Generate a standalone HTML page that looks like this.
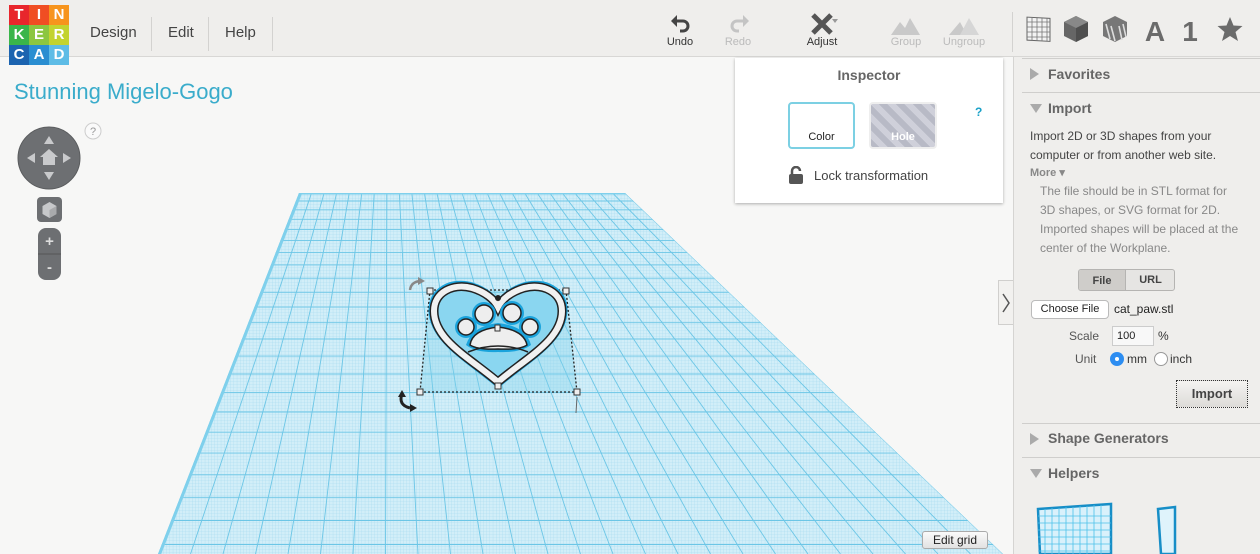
<!DOCTYPE html>
<html><head><meta charset="utf-8"><style>
*{box-sizing:border-box;margin:0;padding:0}
body{width:1260px;height:554px;overflow:hidden;position:relative;font-family:"Liberation Sans",sans-serif;background:#f7f7f6}
.abs{position:absolute}
#top{left:0;top:0;width:1260px;height:57px;background:#efeeec;border-bottom:1px solid #d8d7d5}
.tile{position:absolute;width:20px;height:20px;color:#fff;font-weight:bold;font-size:15px;text-align:center;line-height:20px}
.menu{position:absolute;top:24px;font-size:15px;color:#444}
.sep{position:absolute;top:17px;width:1px;height:34px;background:#d3d2d0}
.tl{position:absolute;top:36px;font-size:11px;text-align:center;width:60px}
#right{left:1013px;top:57px;width:247px;height:497px;background:#efeeec;border-left:1px solid #d5d4d2}
.hdr{position:absolute;left:34px;font-size:14px;font-weight:bold;color:#666}
.tri{position:absolute;left:16px;width:0;height:0}
.hl{position:absolute;left:8px;width:239px;height:1px;background:#cfcecc}
.rt{position:absolute;font-size:12px;color:#444}
</style></head><body>

<svg class="abs" style="left:0;top:0" width="1260" height="554">
<defs><clipPath id="c"><polygon points="299,193 625,193 1003,554 158,554"/></clipPath>
<pattern id="mp" width="3.2" height="3" patternUnits="userSpaceOnUse"><rect width="3.2" height="3" fill="#d2eef8"/><path d="M0 0H3.2M0 0V3" stroke="#a6dbef" stroke-width="0.6"/></pattern></defs>
<g clip-path="url(#c)">
<rect x="150" y="190" width="860" height="370" fill="url(#mp)"/>
<g stroke="#6cc6e6" stroke-width="0.9" fill="none">
<path d="M299 193L158 554M311.5 193L190.5 554M324.1 193L223 554M336.6 193L255.5 554M349.2 193L288 554M361.7 193L320.5 554M374.2 193L353 554M386.8 193L385.5 554M399.3 193L418 554M411.8 193L450.5 554M424.4 193L483 554M436.9 193L515.5 554M449.5 193L548 554M462 193L580.5 554M474.5 193L613 554M487.1 193L645.5 554M499.6 193L678 554M512.2 193L710.5 554M524.7 193L743 554M537.2 193L775.5 554M549.8 193L808 554M562.3 193L840.5 554M574.8 193L873 554M587.4 193L905.5 554M599.9 193L938 554M612.5 193L970.5 554M625 193L1003 554"/>
<path d="M150 194H1010M150 201H1010M150 209.8H1010M150 219.3H1010M150 229.6H1010M150 240.6H1010M150 252.4H1010M150 264.9H1010M150 278.2H1010M150 292.3H1010M150 307.1H1010M150 322.7H1010M150 339H1010M150 356.1H1010M150 374H1010M150 392.6H1010M150 412H1010M150 432.2H1010M150 453.1H1010M150 474.8H1010M150 497.3H1010M150 520.5H1010M150 544.5H1010"/>
</g>
<path d="M299 193L158 554" stroke="#7fd0ec" stroke-width="6"/>
<path d="M299 193H625" stroke="#7fd0ec" stroke-width="3"/>
</g>
<polygon points="430,290 566,290 577,392 420,392" fill="#7fd0ec" opacity="0.35"/>
<path d="M430 290H566M420 392H577M430 290L420 392M566 290L577 392" stroke="#222" stroke-width="1.3" stroke-dasharray="2,2" fill="none"/>
<path d="M498 384 C470 360 432 340 432 310 C432 290 452 280 472 286 C485 290 494 298 498 306 C502 298 511 290 524 286 C544 280 564 290 564 310 C564 340 526 360 498 384Z" fill="#8ad6f0" stroke="#1aa3dc" stroke-width="7"/>
<path d="M498 382 C470 358 434 340 434 311 C434 292 453 283 472 288 C485 292 494 299 498 307 C502 299 511 292 524 288 C543 283 562 292 562 311 C562 340 526 358 498 382Z" fill="none" stroke="#222" stroke-width="9"/>
<path d="M498 382 C470 358 434 340 434 311 C434 292 453 283 472 288 C485 292 494 299 498 307 C502 299 511 292 524 288 C543 283 562 292 562 311 C562 340 526 358 498 382Z" fill="none" stroke="#f1f1f1" stroke-width="6"/>
<g fill="#1aa3dc"><circle cx="484" cy="314" r="12"/><circle cx="512" cy="313" r="12"/><circle cx="466" cy="327" r="11"/><circle cx="530" cy="327" r="11"/><path d="M466 345 Q472 326 498 323 Q526 326 531 345 Q520 353 498 352 Q476 353 466 345Z"/></g>
<g fill="#eee" stroke="#222" stroke-width="1.5">
<path d="M470 345 Q472 330 498 327 Q524 330 527 345 Q520 350 498 349 Q478 350 470 345Z"/>
<circle cx="484" cy="314" r="9"/><circle cx="512" cy="313" r="9"/>
<circle cx="466" cy="327" r="8"/><circle cx="530" cy="327" r="8"/>
</g>
<path d="M468 352 Q498 340 528 352" stroke="#222" stroke-width="1.5" fill="none"/>
<circle cx="498" cy="298" r="3" fill="#222"/>
<g fill="#eee" stroke="#333" stroke-width="1"><rect x="427" y="288" width="6" height="6"/><rect x="563" y="288" width="6" height="6"/><rect x="417" y="389" width="6" height="6"/><rect x="574" y="389" width="6" height="6"/><rect x="495" y="383" width="6" height="6"/><rect x="495" y="325" width="5" height="6"/></g>
<path d="M410 290 Q411 282 420 281" stroke="#888" stroke-width="2.5" fill="none"/><path d="M418 277 L425 281 L418 285Z" fill="#888"/>
<path d="M402 394 Q398 405 410 408" stroke="#222" stroke-width="3" fill="none"/><path d="M398 397 L402 390 L406 397Z" fill="#222"/><path d="M410 404 L417 408 L410 412Z" fill="#222"/>
<path d="M577 397 L576 413" stroke="#666" stroke-width="1"/>
</svg>

<div class="abs" style="left:14px;top:79px;font-size:22px;color:#3aaccb">Stunning Migelo-Gogo</div>

<svg class="abs" style="left:15px;top:120px" width="95" height="165">
<circle cx="34" cy="38" r="31" fill="#6d6f72" stroke="#5a5c5e"/>
<g fill="#c9cacc"><path d="M34 16l-5 8h10z"/><path d="M34 60l-5-8h10z"/><path d="M12 38l8-5v10z"/><path d="M56 38l-8-5v10z"/><path d="M34 29l-9 8h3v8h12v-8h3z"/></g>
<circle cx="78" cy="11" r="8" fill="#fafafa" stroke="#ccc"/><text x="78" y="15" font-size="11" fill="#999" text-anchor="middle" font-family="Liberation Sans">?</text>
<rect x="22" y="77" width="25" height="25" rx="4" fill="#6d6f72"/>
<path d="M34.5 82l7 4v8l-7 4-7-4v-8z" fill="#c7c8ca"/><path d="M34.5 90l7-4v8l-7 4z" fill="#a9aaac"/>
<rect x="23" y="108" width="23" height="52" rx="8" fill="#6d6f72"/>
<line x1="23" y1="134" x2="46" y2="134" stroke="#555"/>
<text x="34.5" y="126" font-size="15" fill="#ddd" text-anchor="middle" font-weight="bold" font-family="Liberation Sans">+</text>
<text x="34.5" y="152" font-size="15" fill="#ddd" text-anchor="middle" font-weight="bold" font-family="Liberation Sans">-</text>
</svg>

<div id="top" class="abs">
<div class="tile" style="left:9px;top:5px;background:#e8262c">T</div>
<div class="tile" style="left:29px;top:5px;background:#f04e23">I</div>
<div class="tile" style="left:49px;top:5px;background:#f7941d">N</div>
<div class="tile" style="left:9px;top:25px;background:#3ab54a">K</div>
<div class="tile" style="left:29px;top:25px;background:#8cc63f">E</div>
<div class="tile" style="left:49px;top:25px;background:#c3d32f">R</div>
<div class="tile" style="left:9px;top:45px;background:#1c64b0">C</div>
<div class="tile" style="left:29px;top:45px;background:#2a8ed1">A</div>
<div class="tile" style="left:49px;top:45px;background:#5ebce6">D</div>
<div class="menu" style="left:90px">Design</div><div class="sep" style="left:151px"></div>
<div class="menu" style="left:168px">Edit</div><div class="sep" style="left:208px"></div>
<div class="menu" style="left:225px">Help</div><div class="sep" style="left:272px"></div>
<svg class="abs" style="left:670px;top:14px" width="22" height="20"><path d="M5 7h8a5 5 0 0 1 0 10h-3" stroke="#444" stroke-width="3" fill="none"/><path d="M1 7l6-6v12z" fill="#444"/></svg>
<div class="tl" style="left:650px;color:#333">Undo</div>
<svg class="abs" style="left:728px;top:14px" width="22" height="20"><path d="M17 7h-8a5 5 0 0 0 0 10h2" stroke="#c4c4c4" stroke-width="3" fill="none"/><path d="M21 7l-6-6v12z" fill="#c4c4c4"/></svg>
<div class="tl" style="left:708px;color:#bbb">Redo</div>
<svg class="abs" style="left:810px;top:12px" width="32" height="24"><path d="M3 3l18 18M21 3L3 21" stroke="#555" stroke-width="5"/><path d="M28 7l-3 4-3-4z" fill="#999"/></svg>
<div class="tl" style="left:792px;color:#333">Adjust</div>
<svg class="abs" style="left:890px;top:16px" width="32" height="20"><path d="M1 19l9-13 5 6 5-10 10 17z" fill="#c9c9c9"/></svg>
<div class="tl" style="left:876px;color:#bbb">Group</div>
<svg class="abs" style="left:948px;top:16px" width="32" height="20"><path d="M1 19l11-13 7 13z" fill="#c9c9c9"/><path d="M12 19l9-17 10 17z" fill="#d6d6d6"/></svg>
<div class="tl" style="left:934px;color:#bbb">Ungroup</div>
<div class="sep" style="left:1012px;top:12px;height:40px"></div>
<svg class="abs" style="left:1024px;top:14px" width="220" height="30">
<g stroke="#666" fill="#f3f3f3"><rect x="3" y="3" width="23" height="23" transform="skewY(3)"/></g>
<path d="M8 4v23M13 4v23M18 4v23M23 4v23M3 8h23M3 13h23M3 18h23M3 23h23" stroke="#777" stroke-width="0.8"/>
<path d="M52 2l12 6v14l-12 6-12-6v-14z" fill="#666"/><path d="M52 14l12-6v14l-12 6z" fill="#4f4f4f"/><path d="M40 8l12-6 12 6-12 6z" fill="#888"/>
<path d="M91 2l12 6v14l-12 6-12-6v-14z" fill="#777"/><path d="M82 10l4 15M87 12l4 15M95 12l3 14M99 10l3 13" stroke="#ddd" stroke-width="1.6"/>
<text x="131" y="27" font-size="28" font-weight="bold" fill="#6b6b6b" text-anchor="middle" font-family="Liberation Sans">A</text>
<text x="166" y="27" font-size="28" font-weight="bold" fill="#6b6b6b" text-anchor="middle" font-family="Liberation Sans">1</text>
<path d="M206 3l3.5 8.5 9 .5-7 6 2.5 9-8-5-8 5 2.5-9-7-6 9-.5z" fill="#6b6b6b"/>
</svg>
</div>

<div class="abs" style="left:735px;top:58px;width:268px;height:145px;background:#fff;box-shadow:0 1px 3px rgba(0,0,0,.3)">
<div class="abs" style="left:0;width:268px;top:9px;text-align:center;font-size:14px;font-weight:bold;color:#666">Inspector</div>
<div class="abs" style="left:53px;top:44px;width:67px;height:47px;border:2px solid #7cd0e3;border-radius:4px;background:#fff;font-size:11px;text-align:center;padding-top:27px;color:#222">Color</div>
<div class="abs" style="left:134px;top:44px;width:68px;height:47px;border:2px solid #eee;border-radius:4px;background:repeating-linear-gradient(45deg,#b8bac6 0 6px,#cfd0da 6px 12px);font-size:11px;font-weight:bold;text-align:center;padding-top:27px;color:#fff">Hole</div>
<div class="abs" style="left:240px;top:47px;font-size:12px;font-weight:bold;color:#1aa1c8">?</div>
<svg class="abs" style="left:53px;top:108px" width="16" height="18"><rect x="1" y="8" width="14" height="10" rx="2" fill="#555"/><path d="M4 8V5a4 4 0 0 1 8 0" stroke="#555" stroke-width="2.5" fill="none"/></svg>
<div class="abs" style="left:79px;top:110px;font-size:13px;color:#444">Lock transformation</div>
</div>

<div class="abs" style="left:998px;top:280px;width:15px;height:45px;background:#f2f1ef;border:1px solid #d0cfcd;border-right:none"></div>
<svg class="abs" style="left:1001px;top:293px" width="10" height="20"><path d="M2 1l6 9-6 9" stroke="#555" stroke-width="1.5" fill="none"/></svg>

<div id="right" class="abs">
<div class="hl" style="top:1px"></div>
<div class="tri" style="top:11px;border-left:9px solid #aaa;border-top:6px solid transparent;border-bottom:6px solid transparent"></div>
<div class="hdr" style="top:9px">Favorites</div>
<div class="hl" style="top:35px"></div>
<div class="tri" style="top:47px;border-top:9px solid #aaa;border-left:6px solid transparent;border-right:6px solid transparent"></div>
<div class="hdr" style="top:43px">Import</div>
<div class="rt" style="left:16px;top:70px;line-height:19px;width:210px">Import 2D or 3D shapes from your computer or from another web site.</div>
<div class="rt" style="left:16px;top:109px;font-size:11px;font-weight:bold;color:#888">More ▾</div>
<div class="rt" style="left:26px;top:125px;line-height:19px;width:205px;color:#888">The file should be in STL format for 3D shapes, or SVG format for 2D. Imported shapes will be placed at the center of the Workplane.</div>
<div class="abs" style="left:64px;top:212px;width:97px;height:22px;border:1px solid #b5b4b2;border-radius:3px;background:#e6e5e3;overflow:hidden">
<div class="abs" style="left:0;top:0;width:46px;height:22px;background:#cfcdca;font-size:11px;font-weight:bold;text-align:center;line-height:22px;color:#444">File</div>
<div class="abs" style="left:46px;top:0;width:50px;height:22px;font-size:11px;font-weight:bold;text-align:center;line-height:20px;color:#444;border-left:1px solid #b5b4b2">URL</div></div>
<div class="abs" style="left:17px;top:243px;width:78px;height:19px;background:#fff;border:1px solid #bbb;border-radius:4px;font-size:11px;text-align:center;line-height:17px;color:#222">Choose File</div>
<div class="rt" style="left:100px;top:245px;color:#222">cat_paw.stl</div>
<div class="rt" style="left:55px;top:272px;color:#555">Scale</div>
<div class="abs" style="left:98px;top:269px;width:42px;height:20px;background:#f8f8f8;border:1px solid #ccc;font-size:11px;padding:3px 4px;color:#222">100</div>
<div class="rt" style="left:144px;top:272px;color:#333">%</div>
<div class="rt" style="left:61px;top:295px;color:#555">Unit</div>
<div class="abs" style="left:96px;top:295px;width:14px;height:14px;border-radius:50%;background:#2d8df1"><div class="abs" style="left:5px;top:5px;width:4px;height:4px;border-radius:50%;background:#fff"></div></div>
<div class="rt" style="left:113px;top:295px;color:#333">mm</div>
<div class="abs" style="left:140px;top:295px;width:14px;height:14px;border-radius:50%;background:#fff;border:1px solid #999"></div>
<div class="rt" style="left:156px;top:295px;color:#333">inch</div>
<div class="abs" style="left:162px;top:323px;width:72px;height:28px;border:1px dotted #333;background:linear-gradient(#f4f3f1,#dddbd8);font-size:13px;font-weight:bold;text-align:center;line-height:26px;color:#444">Import</div>
<div class="hl" style="top:366px"></div>
<div class="tri" style="top:376px;border-left:9px solid #aaa;border-top:6px solid transparent;border-bottom:6px solid transparent"></div>
<div class="hdr" style="top:373px">Shape Generators</div>
<div class="hl" style="top:400px"></div>
<div class="tri" style="top:412px;border-top:9px solid #aaa;border-left:6px solid transparent;border-right:6px solid transparent"></div>
<div class="hdr" style="top:408px">Helpers</div>
<svg class="abs" style="left:20px;top:445px" width="160" height="52">
<path d="M4 7L77 2V52H6Z" fill="#d9f1fb" stroke="#178ec7" stroke-width="2.5"/>
<path d="M11 7V52M18 6V52M25 6V52M32 5V52M39 5V52M46 4V52M53 4V52M60 3V52M67 3V52M4 14H77M4 21H77M4 28H77M4 35H77M4 42H77M4 49H77" stroke="#4cc1ea" stroke-width="0.8"/>
<path d="M124 7L141 5V52H127Z" fill="#dff3fb" stroke="#178ec7" stroke-width="2.5"/>
</svg>
</div>

<div class="abs" style="left:922px;top:531px;width:66px;height:18px;border:1px solid #aaa;border-radius:3px;background:linear-gradient(#fafafa,#e2e2e2);font-size:12px;text-align:center;line-height:16px;color:#222">Edit grid</div>
</body></html>
